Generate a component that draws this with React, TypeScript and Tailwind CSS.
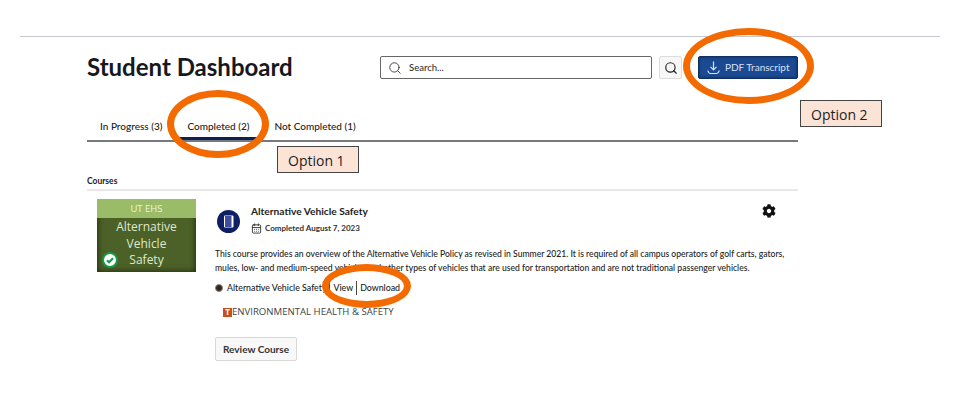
import { Search, CalendarDays } from "lucide-react";
import { FaCog } from "react-icons/fa";

const Ring = ({ className }: { className: string }) => (
  <div className={`absolute rounded-[50%] border-[7px] border-[#f26a00] ${className}`} />
);

const OptionLabel = ({ text, className }: { text: string; className: string }) => (
  <div
    className={`absolute w-[82px] h-[27px] bg-[#fbe3d6] border border-[#444] pl-[10px] pt-[4px] text-[14px] leading-[20px] text-[#222] font-['Open_Sans',sans-serif] ${className}`}
  >
    {text}
  </div>
);

const Tab = ({ label, active }: { label: string; active?: boolean }) => (
  <div
    className={`h-[33px] pl-[13px] pr-[12px] pt-[11px] text-[10px] leading-[16px] font-medium text-[#222] ${
      active ? "border-b-[3px] border-[#10204f]" : ""
    }`}
  >
    {label}
  </div>
);

const App = () => {
  return (
    <div className="relative w-[960px] h-[415px] bg-white overflow-hidden pt-[36px] font-['Lato',sans-serif]">
      <div className="mx-[20px] h-px bg-[#c5c8d0]" />

      <div className="ml-[87px] w-[711px]">
        <div className="flex items-center h-[23px] mt-[19px]">
          <h1 className="w-[293px] pb-[3px] text-[24px] leading-[23px] font-bold text-[#16181d]">
            Student Dashboard
          </h1>
          <div className="flex items-center gap-[7px] w-[272px] h-[23px] px-[7px] border border-[#666] rounded-[2px] text-[9.5px] font-medium text-[#333]">
            <Search size={14} strokeWidth={1.5} />
            <span className="pt-[1px]">Search...</span>
          </div>
          <div className="flex items-center justify-center w-[23px] h-[23px] ml-[7px] border border-[#ddd] rounded-[2px] bg-[#f7f7f7] text-[#222]">
            <Search size={14} strokeWidth={2} />
          </div>
          <div className="flex items-center gap-[4px] w-[100px] h-[23px] ml-[16px] pl-[7px] rounded-[2px] bg-[#1b4a92] border border-[#10305f] shadow-[inset_0_0_3px_#0c2550] text-[10px] text-[#d5e2f5]">
            <svg width="15" height="15" viewBox="0 0 15 15" fill="none" stroke="currentColor" strokeWidth="1.2">
              <path d="M7.5 1.5v8M4.5 6.8l3 3 3-3M1.8 10.5c.4 2 1.6 3 3 3h5.4c1.4 0 2.6-1 3-3" />
            </svg>
            <span>PDF Transcript</span>
          </div>
        </div>

        <div className="flex items-end h-[63px] border-b-[2px] border-[#77797f] -mb-px pt-[27px]">
          <Tab label="In Progress (3)" />
          <Tab label="Completed (2)" active />
          <Tab label="Not Completed (1)" />
        </div>

        <div className="mt-[35px] pb-[3px] border-b-[2px] border-[#e8e8e8] text-[8.5px] leading-[10px] font-bold text-[#222]">
          Courses
        </div>

        <div className="flex mt-[8px]">
          <div className="relative ml-[10px] w-[99px] h-[73px] shrink-0 text-center text-[#dfe8cd] bg-[#4c6128] shadow-[inset_0_0_6px_#18220c]">
            <div className="h-[19px] bg-[#9abb68] text-[9.5px] leading-[19px] text-[#eef5df] font-['Open_Sans',sans-serif]">
              UT EHS
            </div>
            <div className="pt-[1px] text-[12px] leading-[16.5px] font-['Open_Sans',sans-serif]">
              <div>Alternative</div>
              <div>Vehicle</div>
              <div>Safety</div>
            </div>
            <svg className="absolute left-[5px] bottom-[4px]" width="16" height="16" viewBox="0 0 16 16">
              <circle cx="8" cy="8" r="7" fill="#fff" stroke="#18984a" strokeWidth="2" />
              <path d="M5 8.2l2.1 2.1L11 6.2" fill="none" stroke="#18984a" strokeWidth="2" />
            </svg>
          </div>

          <div className="ml-[19px] w-[582px] text-[#222]">
            <div className="flex items-start">
              <svg className="ml-[2px] mt-[11px] shrink-0" width="23" height="23" viewBox="0 0 23 23">
                <circle cx="11.5" cy="11.5" r="11.5" fill="#0f1f66" />
                <rect x="7" y="5.5" width="9.5" height="12" rx="1" fill="#fff" />
                <rect x="8" y="6" width="6.5" height="11" fill="#3f4f9a" />
              </svg>
              <div className="ml-[11px] mt-[6px]">
                <div className="text-[10.2px] leading-[13px] font-bold">Alternative Vehicle Safety</div>
                <div className="flex items-center gap-[3px] mt-[4px] text-[8px] leading-[12px] font-bold text-[#333]">
                  <CalendarDays size={11} strokeWidth={2} />
                  <span>Completed August 7, 2023</span>
                </div>
              </div>
              <FaCog className="ml-auto mr-[21px] mt-[5px] text-[#111]" size={14} />
            </div>

            <p className="mt-[13px] w-[580px] text-[8.6px] leading-[14px] font-medium">
              This course provides an overview of the Alternative Vehicle Policy as revised in Summer 2021. It is
              required of all campus operators of golf carts, gators, mules, low- and medium-speed vehicles and other
              types of vehicles that are used for transportation and are not traditional passenger vehicles.
            </p>

            <div className="flex items-center mt-[6px] h-[14px] text-[8.8px] font-medium">
              <span className="w-[8px] h-[8px] rounded-full bg-[#3a2410] border border-[#888]" />
              <span className="ml-[4px]">Alternative Vehicle Safety</span>
              <span className="ml-[3px] pl-[3px] border-l border-[#444]">View</span>
              <span className="ml-[3px] pl-[3px] border-l border-[#444]">Download</span>
            </div>

            <div className="flex items-center mt-[11px] ml-[8px] h-[12px] text-[9.6px] text-[#444] font-['Open_Sans',sans-serif]">
              <span className="flex items-center justify-center w-[9px] h-[9px] bg-[#c8501e] text-white text-[8px] font-bold leading-none">
                T
              </span>
              <span>ENVIRONMENTAL HEALTH &amp; SAFETY</span>
            </div>

            <button className="mt-[19px] w-[82px] h-[24px] border border-[#d8d8d8] rounded-[2px] bg-[#f8f8f8] text-[10px] font-bold text-[#333]">
              Review Course
            </button>
          </div>
        </div>
      </div>

      <Ring className="left-[167px] top-[90px] w-[102px] h-[68px]" />
      <Ring className="left-[683px] top-[28px] w-[131px] h-[76px]" />
      <Ring className="left-[322px] top-[264px] w-[89px] h-[44px]" />
      <OptionLabel text="Option 1" className="left-[277px] top-[146px]" />
      <OptionLabel text="Option 2" className="left-[800px] top-[100px]" />
    </div>
  );
};

export default App;
